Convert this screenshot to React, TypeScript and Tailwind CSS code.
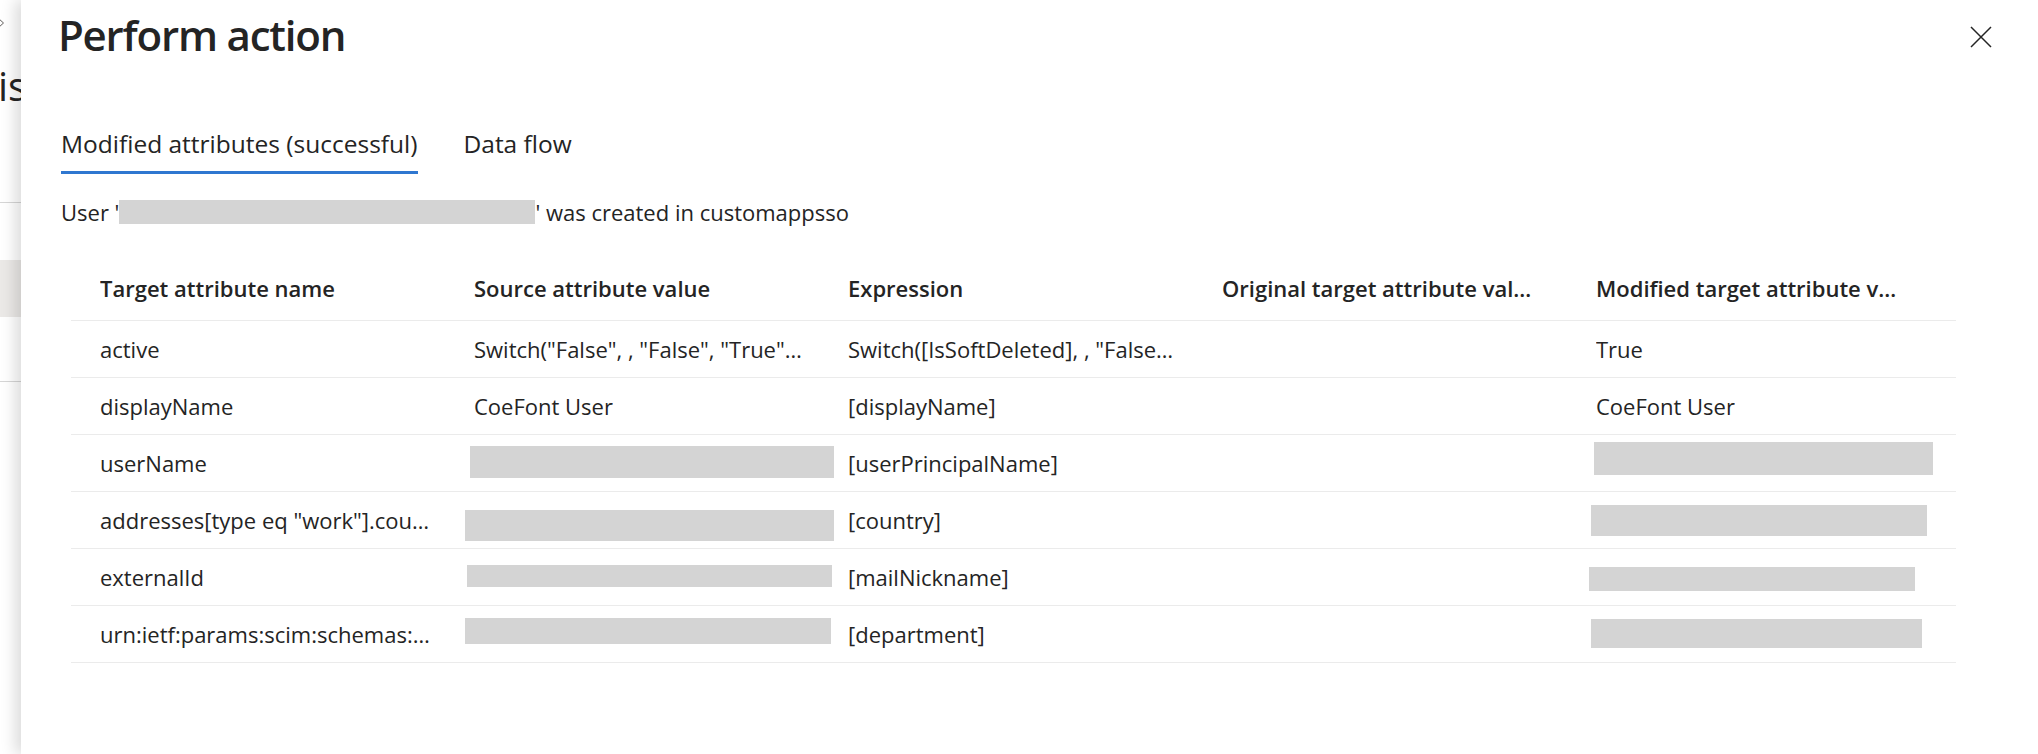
type Cell = string | { w: number; h: number; ml: number; mt: number } | null;

const headers = [
  "Target attribute name",
  "Source attribute value",
  "Expression",
  "Original target attribute val…",
  "Modified target attribute v…",
];

// redacted values are drawn as plain grey blocks, like in the screenshot
const rows: Cell[][] = [
  ["active", 'Switch("False", , "False", "True"…', 'Switch([IsSoftDeleted], , "False…', null, "True"],
  ["displayName", "CoeFont User", "[displayName]", null, "CoeFont User"],
  [
    "userName",
    { w: 364, h: 32, ml: -4, mt: 11 },
    "[userPrincipalName]",
    null,
    { w: 339, h: 33, ml: -2, mt: 7 },
  ],
  [
    'addresses[type eq "work"].cou…',
    { w: 369, h: 31, ml: -9, mt: 18 },
    "[country]",
    null,
    { w: 336, h: 31, ml: -5, mt: 13 },
  ],
  [
    "externalId",
    { w: 365, h: 22, ml: -7, mt: 16 },
    "[mailNickname]",
    null,
    { w: 326, h: 24, ml: -7, mt: 18 },
  ],
  [
    "urn:ietf:params:scim:schemas:…",
    { w: 366, h: 26, ml: -9, mt: 12 },
    "[department]",
    null,
    { w: 331, h: 29, ml: -5, mt: 13 },
  ],
];

function TableCell({ value, last }: { value: Cell; last?: boolean }) {
  const width = last ? "flex-1 min-w-0" : "w-[374px] shrink-0";
  if (value && typeof value === "object") {
    return (
      <div className={`${width} flex items-start pl-[29px]`}>
        <div
          className="shrink-0 bg-[#d4d4d4]"
          style={{ width: value.w, height: value.h, marginLeft: value.ml, marginTop: value.mt }}
        />
      </div>
    );
  }
  return (
    <div className={`${width} flex items-center overflow-hidden pl-[29px] pr-[6px]`}>
      <span className="truncate whitespace-nowrap">{value}</span>
    </div>
  );
}

export default function App() {
  return (
    <div className="flex h-[754px] w-[2038px] overflow-hidden bg-white font-['Open_Sans',sans-serif] text-[22px] text-[#242424]">
      {/* page behind the side panel */}
      <div className="flex w-[21px] shrink-0 flex-col overflow-hidden bg-white">
        <svg className="ml-[-4px] mt-[17px] h-[12px] w-[10px] shrink-0" viewBox="0 0 10 12" fill="none">
          <path d="M2 1l5.5 5L2 11" stroke="#605e5c" strokeWidth="1" />
        </svg>
        <div className="ml-[-2px] mt-[37px] whitespace-nowrap text-[40px] leading-[40px] text-[#242424]">is</div>
        <div className="mt-[96px] h-px shrink-0 bg-[#d6d6d6]" />
        <div className="mt-[57px] h-[57px] shrink-0 bg-[#ebe9e7]" />
        <div className="mt-[64px] h-px shrink-0 bg-[#d6d6d6]" />
      </div>

      {/* side panel */}
      <div className="relative flex min-w-0 flex-1 flex-col bg-white shadow-[-6px_0_14px_rgba(0,0,0,0.14)]">
        <div className="flex items-start justify-between pl-[37px] pr-[46px]">
          <h1 className="pt-[13px] text-[42px] font-semibold leading-[44px] tracking-[-1.2px] text-[#242424]">
            Perform action
          </h1>
          <button type="button" className="mt-[26px]">
            <svg className="h-[22px] w-[22px]" viewBox="0 0 22 22" fill="none">
              <path d="M1 1l20 20M21 1L1 21" stroke="#242424" strokeWidth="1.5" />
            </svg>
          </button>
        </div>

        <div className="mt-[71px] flex gap-[46px] pl-[40px] text-[24.5px]">
          <div className="flex flex-col">
            <span className="leading-[32px]">Modified attributes (successful)</span>
            <span className="mt-[11px] h-[3px] bg-[#2f77d0]" />
          </div>
          <div className="flex flex-col">
            <span className="leading-[32px]">Data flow</span>
            <span className="mt-[11px] h-[3px]" />
          </div>
        </div>

        <div className="mt-[22px] flex items-center pl-[40px] leading-[32px]">
          <span>User '</span>
          <span className="h-[24px] w-[416px] bg-[#d4d4d4]" />
          <span>' was created in customappsso</span>
        </div>

        <div className="ml-[50px] mr-[82px] mt-[29px] flex flex-col">
          <div className="flex h-[64px] border-b border-[#ebebeb] font-semibold">
            {headers.map((h, i) => (
              <div
                key={h}
                className={`${i === 4 ? "flex-1 min-w-0" : "w-[374px] shrink-0"} flex items-center overflow-hidden pl-[29px] pr-[20px]`}
              >
                <span className="truncate whitespace-nowrap">{h}</span>
              </div>
            ))}
          </div>
          {rows.map((r, ri) => (
            <div key={ri} className="flex h-[57px] border-b border-[#ebebeb]">
              {r.map((c, ci) => (
                <TableCell key={ci} value={c} last={ci === 4} />
              ))}
            </div>
          ))}
        </div>
      </div>
    </div>
  );
}
